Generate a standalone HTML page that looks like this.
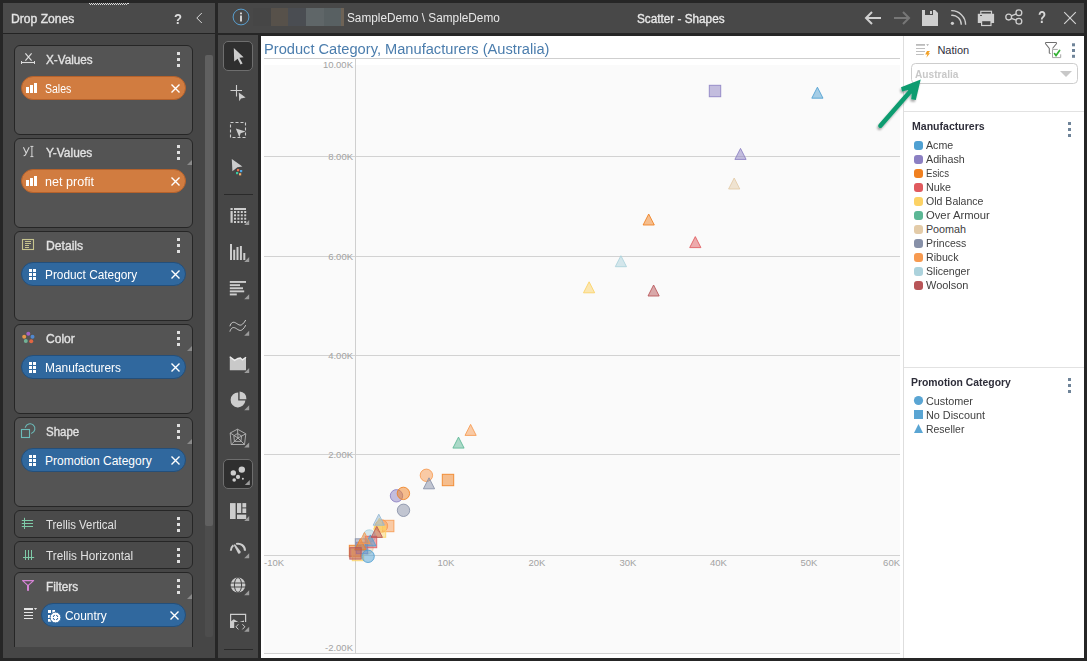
<!DOCTYPE html><html><head><meta charset='utf-8'><style>
*{margin:0;padding:0;box-sizing:border-box}
html,body{width:1087px;height:661px;overflow:hidden;background:#262626;font-family:"Liberation Sans", sans-serif}
.a{position:absolute}
.t{position:absolute;white-space:pre;line-height:1}
.box{position:absolute;left:14px;width:179px;border:1px solid #262626;border-radius:6px;background:#545454;overflow:hidden}
.ttl{position:absolute;left:31px;color:#e2e2e2;font-size:12px;font-weight:700;white-space:pre;line-height:1}
.keb{position:absolute;width:3px;height:3px;background:#e0e0e0;box-shadow:0 6px 0 #e0e0e0,0 12px 0 #e0e0e0}
.rsz{position:absolute;width:0;height:0;border-left:5px solid transparent;border-bottom:5px solid #8a8a8a}
.pill{position:absolute;left:6px;width:165px;height:24px;border-radius:12px}
.po{background:#d17c40;border:1px solid #b5622c}
.pb{background:#30689e;border:1px solid #244f7a}
.ptxt{position:absolute;left:23px;top:6px;color:#fff;font-size:12px;white-space:pre;line-height:1}
.px{position:absolute;left:149px;top:7px;width:9px;height:9px}
.tb{position:absolute;left:0;width:40px;height:30px}
.leg{position:absolute;left:926px;font-size:11px;color:#404040;white-space:pre;line-height:1}
.sw{position:absolute;left:914px;width:9px;height:9px;border-radius:3px}
</style></head><body>
<div class='a' style='left:3px;top:3px;width:212px;height:655px;background:#464646'></div>
<div class='a' style='left:3px;top:3px;width:212px;height:30px;background:#4a4a4a'></div>
<div class='a' style='left:3px;top:33px;width:212px;height:1px;background:#232323'></div>
<svg class='a' style='left:0;top:0' width='140' height='8'><rect x='89' y='3' width='1' height='1' fill='#d8d8d8'/><rect x='90' y='4' width='1' height='1' fill='#d8d8d8'/><rect x='91' y='3' width='1' height='1' fill='#d8d8d8'/><rect x='92' y='4' width='1' height='1' fill='#d8d8d8'/><rect x='93' y='3' width='1' height='1' fill='#d8d8d8'/><rect x='94' y='4' width='1' height='1' fill='#d8d8d8'/><rect x='95' y='3' width='1' height='1' fill='#d8d8d8'/><rect x='96' y='4' width='1' height='1' fill='#d8d8d8'/><rect x='97' y='3' width='1' height='1' fill='#d8d8d8'/><rect x='98' y='4' width='1' height='1' fill='#d8d8d8'/><rect x='99' y='3' width='1' height='1' fill='#d8d8d8'/><rect x='100' y='4' width='1' height='1' fill='#d8d8d8'/><rect x='101' y='3' width='1' height='1' fill='#d8d8d8'/><rect x='102' y='4' width='1' height='1' fill='#d8d8d8'/><rect x='103' y='3' width='1' height='1' fill='#d8d8d8'/><rect x='104' y='4' width='1' height='1' fill='#d8d8d8'/><rect x='105' y='3' width='1' height='1' fill='#d8d8d8'/><rect x='106' y='4' width='1' height='1' fill='#d8d8d8'/><rect x='107' y='3' width='1' height='1' fill='#d8d8d8'/><rect x='108' y='4' width='1' height='1' fill='#d8d8d8'/><rect x='109' y='3' width='1' height='1' fill='#d8d8d8'/><rect x='110' y='4' width='1' height='1' fill='#d8d8d8'/><rect x='111' y='3' width='1' height='1' fill='#d8d8d8'/><rect x='112' y='4' width='1' height='1' fill='#d8d8d8'/><rect x='113' y='3' width='1' height='1' fill='#d8d8d8'/><rect x='114' y='4' width='1' height='1' fill='#d8d8d8'/><rect x='115' y='3' width='1' height='1' fill='#d8d8d8'/><rect x='116' y='4' width='1' height='1' fill='#d8d8d8'/><rect x='117' y='3' width='1' height='1' fill='#d8d8d8'/><rect x='118' y='4' width='1' height='1' fill='#d8d8d8'/><rect x='119' y='3' width='1' height='1' fill='#d8d8d8'/><rect x='120' y='4' width='1' height='1' fill='#d8d8d8'/><rect x='121' y='3' width='1' height='1' fill='#d8d8d8'/><rect x='122' y='4' width='1' height='1' fill='#d8d8d8'/><rect x='123' y='3' width='1' height='1' fill='#d8d8d8'/><rect x='124' y='4' width='1' height='1' fill='#d8d8d8'/><rect x='125' y='3' width='1' height='1' fill='#d8d8d8'/><rect x='126' y='4' width='1' height='1' fill='#d8d8d8'/><rect x='127' y='3' width='2' height='1' fill='#d8d8d8'/></svg>
<div class='t' style='left:10.80px;top:13.00px;font-size:12px;font-weight:400;color:#e4e4e4;transform:scaleX(1.0096);transform-origin:0 0;-webkit-text-stroke:0.35px #e4e4e4;'>Drop Zones</div>
<div class='t' style='left:174.00px;top:10.72px;font-size:15.5px;font-weight:700;color:#dedede;transform:scaleX(0.8461);transform-origin:0 0;'>?</div>
<svg class='a' style='left:194px;top:12px' width='10' height='12'><path d='M7.8 1 L2.8 6 L7.8 11' fill='none' stroke='#dadada' stroke-width='1'/></svg>
<div class='a' style='left:205px;top:55px;width:8px;height:582px;background:#4d4d4d;border-radius:2px'></div>
<div class='a' style='left:205px;top:55px;width:8px;height:471px;background:#606060;border-radius:2px'></div>
<div class='box' style='top:45px;height:90px'></div>
<svg class='a' style='left:20px;top:52px' width='16' height='14'><path d='M5.4 1.3 L11.6 8.6 M11.6 1.3 L5.4 8.6' stroke='#ddd' stroke-width='1.2' fill='none'/><path d='M1.5 10.5 H14.5' stroke='#ddd' stroke-width='1.1'/><path d='M1.5 9 V12 M14.5 9 V12' stroke='#ddd' stroke-width='1' fill='none'/></svg>
<div class='t' style='left:45.90px;top:54.00px;font-size:12px;font-weight:400;color:#e2e2e2;transform:scaleX(0.9745);transform-origin:0 0;-webkit-text-stroke:0.35px #e2e2e2;'>X-Values</div>
<div class='keb' style='left:177px;top:52px'></div>
<div class='pill po' style='left:21px;top:76px'></div>
<svg class='a' style='left:26px;top:83px' width='12' height='11'><rect x='0' y='4' width='3' height='6' fill='#fff'/><rect x='4' y='2' width='3' height='8' fill='#fff'/><rect x='8' y='0' width='3' height='10' fill='#fff'/></svg>
<div class='t' style='left:45.00px;top:82.70px;font-size:12px;font-weight:400;color:#fff;transform:scaleX(0.8767);transform-origin:0 0;'>Sales</div>
<svg class='a' style='left:171px;top:84px' width='9' height='9' viewBox='0 0 9 9'><path d='M0.5 0.5 L8.5 8.5 M8.5 0.5 L0.5 8.5' stroke='#fff' stroke-width='1.4'/></svg>
<div class='box' style='top:138px;height:90px'></div>
<svg class='a' style='left:20px;top:143px' width='16' height='16'><path d='M3.4 4.2 L6.3 10.3 M9.2 4.2 L5.5 11.8 Q5 12.8 3.6 12.8' stroke='#d6d6d6' stroke-width='1.1' fill='none'/><path d='M10.4 3.4 H13.4 M11.9 3.4 V13.6 M10.4 13.6 H13.4' stroke='#d6d6d6' stroke-width='1' fill='none'/></svg>
<div class='t' style='left:45.90px;top:147.00px;font-size:12px;font-weight:400;color:#e2e2e2;transform:scaleX(0.9919);transform-origin:0 0;-webkit-text-stroke:0.35px #e2e2e2;'>Y-Values</div>
<div class='keb' style='left:177px;top:145px'></div>
<div class='rsz' style='left:187px;top:160px'></div>
<div class='pill po' style='left:21px;top:169px'></div>
<svg class='a' style='left:26px;top:176px' width='12' height='11'><rect x='0' y='4' width='3' height='6' fill='#fff'/><rect x='4' y='2' width='3' height='8' fill='#fff'/><rect x='8' y='0' width='3' height='10' fill='#fff'/></svg>
<div class='t' style='left:45.00px;top:175.70px;font-size:12px;font-weight:400;color:#fff;transform:scaleX(1.0476);transform-origin:0 0;'>net profit</div>
<svg class='a' style='left:171px;top:177px' width='9' height='9' viewBox='0 0 9 9'><path d='M0.5 0.5 L8.5 8.5 M8.5 0.5 L0.5 8.5' stroke='#fff' stroke-width='1.4'/></svg>
<div class='box' style='top:231px;height:90px'></div>
<svg class='a' style='left:18px;top:234px' width='20' height='20'><rect x='4.5' y='5.5' width='11' height='10' fill='none' stroke='#c6c48e' stroke-width='1.1'/><rect x='7' y='7' width='6' height='1' fill='#c6c48e'/><rect x='7' y='9' width='6' height='1' fill='#c6c48e'/><rect x='7' y='11' width='4' height='1' fill='#c6c48e'/><rect x='7' y='13' width='4' height='1' fill='#c6c48e'/></svg>
<div class='t' style='left:45.90px;top:240.00px;font-size:12px;font-weight:400;color:#e2e2e2;transform:scaleX(1.0120);transform-origin:0 0;-webkit-text-stroke:0.35px #e2e2e2;'>Details</div>
<div class='keb' style='left:177px;top:238px'></div>
<div class='pill pb' style='left:21px;top:262px'></div>
<svg class='a' style='left:29px;top:269px' width='8' height='12'><rect x='0' y='0' width='3' height='3' fill='#fff'/><rect x='0' y='4' width='3' height='3' fill='#fff'/><rect x='0' y='8' width='3' height='3' fill='#fff'/><rect x='4' y='0' width='3' height='3' fill='#fff'/><rect x='4' y='4' width='3' height='3' fill='#fff'/><rect x='4' y='8' width='3' height='3' fill='#fff'/></svg>
<div class='t' style='left:45.00px;top:268.70px;font-size:12px;font-weight:400;color:#fff;transform:scaleX(0.9876);transform-origin:0 0;'>Product Category</div>
<svg class='a' style='left:171px;top:270px' width='9' height='9' viewBox='0 0 9 9'><path d='M0.5 0.5 L8.5 8.5 M8.5 0.5 L0.5 8.5' stroke='#fff' stroke-width='1.4'/></svg>
<div class='box' style='top:324px;height:90px'></div>
<svg class='a' style='left:18px;top:328px' width='20' height='20'><circle cx='10.3' cy='5.7' r='2' fill='#a262c2'/><circle cx='14.5' cy='8.8' r='2' fill='#5088d0'/><circle cx='6.2' cy='8.8' r='2' fill='#e89848'/><circle cx='7.8' cy='13' r='2' fill='#72b296'/><circle cx='13.2' cy='13.2' r='2' fill='#e26642'/></svg>
<div class='t' style='left:45.90px;top:333.00px;font-size:12px;font-weight:400;color:#e2e2e2;transform:scaleX(1.0042);transform-origin:0 0;-webkit-text-stroke:0.35px #e2e2e2;'>Color</div>
<div class='keb' style='left:177px;top:331px'></div>
<div class='rsz' style='left:187px;top:346px'></div>
<div class='pill pb' style='left:21px;top:355px'></div>
<svg class='a' style='left:29px;top:362px' width='8' height='12'><rect x='0' y='0' width='3' height='3' fill='#fff'/><rect x='0' y='4' width='3' height='3' fill='#fff'/><rect x='0' y='8' width='3' height='3' fill='#fff'/><rect x='4' y='0' width='3' height='3' fill='#fff'/><rect x='4' y='4' width='3' height='3' fill='#fff'/><rect x='4' y='8' width='3' height='3' fill='#fff'/></svg>
<div class='t' style='left:45.00px;top:361.70px;font-size:12px;font-weight:400;color:#fff;transform:scaleX(0.9911);transform-origin:0 0;'>Manufacturers</div>
<svg class='a' style='left:171px;top:363px' width='9' height='9' viewBox='0 0 9 9'><path d='M0.5 0.5 L8.5 8.5 M8.5 0.5 L0.5 8.5' stroke='#fff' stroke-width='1.4'/></svg>
<div class='box' style='top:417px;height:90px'></div>
<svg class='a' style='left:18px;top:420px' width='20' height='20'><rect x='3.5' y='9.5' width='8' height='8' fill='none' stroke='#6cbab8' stroke-width='1.1'/><path d='M7.3 7.3 A4.9 4.9 0 1 1 13.6 13.3' fill='none' stroke='#6cbab8' stroke-width='1.1' stroke-linecap='round'/></svg>
<div class='t' style='left:45.90px;top:426.00px;font-size:12px;font-weight:400;color:#e2e2e2;transform:scaleX(0.9573);transform-origin:0 0;-webkit-text-stroke:0.35px #e2e2e2;'>Shape</div>
<div class='keb' style='left:177px;top:424px'></div>
<div class='rsz' style='left:187px;top:439px'></div>
<div class='pill pb' style='left:21px;top:448px'></div>
<svg class='a' style='left:29px;top:455px' width='8' height='12'><rect x='0' y='0' width='3' height='3' fill='#fff'/><rect x='0' y='4' width='3' height='3' fill='#fff'/><rect x='0' y='8' width='3' height='3' fill='#fff'/><rect x='4' y='0' width='3' height='3' fill='#fff'/><rect x='4' y='4' width='3' height='3' fill='#fff'/><rect x='4' y='8' width='3' height='3' fill='#fff'/></svg>
<div class='t' style='left:45.00px;top:454.70px;font-size:12px;font-weight:400;color:#fff;'>Promotion Category</div>
<svg class='a' style='left:171px;top:456px' width='9' height='9' viewBox='0 0 9 9'><path d='M0.5 0.5 L8.5 8.5 M8.5 0.5 L0.5 8.5' stroke='#fff' stroke-width='1.4'/></svg>
<div class='box' style='top:510px;height:28px;background:#4a4a4a'></div>
<svg class='a' style='left:0;top:500px' width='40' height='70'><path d='M24.5 17.8 V29 M21.8 20.5 H33 M21.8 23.5 H33 M21.8 26.5 H33' stroke='#7fcaa8' stroke-width='1' fill='none'/></svg>
<div class='t' style='left:46.10px;top:518.60px;font-size:12px;font-weight:400;color:#e2e2e2;transform:scaleX(0.9485);transform-origin:0 0;'>Trellis Vertical</div>
<div class='keb' style='left:177px;top:517px'></div>
<div class='box' style='top:541px;height:28px;background:#4a4a4a'></div>
<svg class='a' style='left:0;top:500px' width='40' height='70'><path d='M25.5 50 V60 M28.5 50 V60 M31.5 50 V60 M23 57.5 H34.2' stroke='#7fcaa8' stroke-width='1' fill='none'/></svg>
<div class='t' style='left:46.10px;top:549.60px;font-size:12px;font-weight:400;color:#e2e2e2;transform:scaleX(0.9807);transform-origin:0 0;'>Trellis Horizontal</div>
<div class='keb' style='left:177px;top:548px'></div>
<div class='box' style='top:572px;height:86px'></div>
<svg class='a' style='left:0;top:570px' width='40' height='30'><path d='M22.6 10.6 H33.6 L28 15.6 Z' fill='none' stroke='#d684d6' stroke-width='1.2' stroke-linejoin='round'/><rect x='27' y='15' width='2' height='5.8' fill='#d684d6'/></svg>
<div class='t' style='left:45.90px;top:580.70px;font-size:12px;font-weight:400;color:#e2e2e2;transform:scaleX(0.9835);transform-origin:0 0;-webkit-text-stroke:0.35px #e2e2e2;'>Filters</div>
<div class='keb' style='left:177px;top:579px'></div>
<div class='rsz' style='left:187px;top:594px'></div>
<svg class='a' style='left:18px;top:600px' width='24' height='24'><rect x='6' y='8' width='9' height='2' fill='#e6e6e6'/><path d='M6 12.5 H15 M6 15.5 H15 M6 18.5 H15' stroke='#e6e6e6' stroke-width='1'/><path d='M15.9 8 H19.1 L17.5 10Z' fill='#e0e0e0'/></svg>
<div class='pill pb' style='left:41px;top:603px;width:145px'></div>
<svg class='a' style='left:40px;top:600px' width='24' height='26'><rect x='8' y='10' width='3' height='3' fill='#fff'/><rect x='12.3' y='10' width='2.7' height='3' fill='#fff'/><rect x='8' y='15' width='3' height='3' fill='#fff'/><rect x='8' y='19' width='3' height='2.7' fill='#fff'/><circle cx='15.5' cy='17.5' r='5.4' fill='#fff' stroke='#346a9f' stroke-width='1'/><circle cx='15.5' cy='17.5' r='2.4' fill='none' stroke='#346a9f' stroke-width='1'/><path d='M15.5 13 V22 M11 17.5 H20' stroke='#fff' stroke-width='1.2'/></svg>
<div class='t' style='left:65.30px;top:609.60px;font-size:12px;font-weight:400;color:#fff;transform:scaleX(0.9929);transform-origin:0 0;'>Country</div>
<svg class='a' style='left:170px;top:611px' width='9' height='9' viewBox='0 0 9 9'><path d='M0.5 0.5 L8.5 8.5 M8.5 0.5 L0.5 8.5' stroke='#fff' stroke-width='1.4'/></svg>
<div class='a' style='left:3px;top:647px;width:212px;height:11px;background:#464646'></div>
<div class='a' style='left:218px;top:3px;width:866px;height:30px;background:#484848'></div>
<svg class='a' style='left:232px;top:8px' width='18' height='18'><circle cx='9' cy='9' r='7.9' fill='none' stroke='#5a9fcf' stroke-width='1'/><rect x='8.1' y='4.5' width='1.8' height='1.8' fill='#e0e0e0'/><rect x='8.1' y='7.5' width='1.8' height='6' fill='#e0e0e0'/></svg>
<div class='a' style='left:253px;top:8px;width:18px;height:18px;background:#464646'></div>
<div class='a' style='left:271px;top:8px;width:17px;height:18px;background:#57514a'></div>
<div class='a' style='left:288px;top:8px;width:18px;height:18px;background:#4a4d52'></div>
<div class='a' style='left:306px;top:8px;width:18px;height:18px;background:#5f6668'></div>
<div class='a' style='left:324px;top:8px;width:17px;height:18px;background:#586062'></div>
<div class='a' style='left:341px;top:8px;width:3px;height:18px;background:#6e6356'></div>
<div class='t' style='left:347.00px;top:12.00px;font-size:12px;font-weight:400;color:#e8e8e8;transform:scaleX(0.9833);transform-origin:0 0;'>SampleDemo \ SampleDemo</div>
<div class='t' style='left:636.50px;top:12.50px;font-size:12px;font-weight:400;color:#e8e8e8;transform:scaleX(0.9799);transform-origin:0 0;-webkit-text-stroke:0.35px #e8e8e8;'>Scatter - Shapes</div>
<svg class='a' style='left:864px;top:10px' width='20' height='16'><path d='M2 8 H17 M8 2 L2 8 L8 14' fill='none' stroke='#d0d0d0' stroke-width='2'/></svg>
<svg class='a' style='left:892px;top:10px' width='20' height='16'><path d='M2 8 H17 M11 2 L17 8 L11 14' fill='none' stroke='#777' stroke-width='2'/></svg>
<svg class='a' style='left:921px;top:9px' width='18' height='18'><path d='M1 1 H14 L17 4 V17 H1 Z' fill='#cfcfcf'/><rect x='4' y='1' width='8' height='5' fill='#484848'/><rect x='9' y='2' width='2' height='3' fill='#cfcfcf'/></svg>
<svg class='a' style='left:0;top:0' width='1087' height='40'><circle cx='952.4' cy='23.3' r='1.6' fill='#cfcfcf'/><path d='M951.2 15.3 A9.3 9.3 0 0 1 961.3 24.8 M951.2 10.7 A14 14 0 0 1 965.6 24.8' fill='none' stroke='#cfcfcf' stroke-width='1.35'/><rect x='980.8' y='11.3' width='10.7' height='3' fill='none' stroke='#cfcfcf' stroke-width='1.2'/><rect x='977.8' y='13.8' width='16.3' height='9.2' fill='#cfcfcf'/><rect x='980' y='15' width='2' height='1' fill='#555'/><rect x='981.6' y='20.6' width='9.4' height='4.9' fill='#484848' stroke='#cfcfcf' stroke-width='1.2'/><circle cx='1008.7' cy='17.1' r='2.9' fill='none' stroke='#cfcfcf' stroke-width='1.3'/><circle cx='1018.9' cy='12.8' r='2.9' fill='none' stroke='#cfcfcf' stroke-width='1.3'/><circle cx='1018.9' cy='21.2' r='2.9' fill='none' stroke='#cfcfcf' stroke-width='1.3'/><path d='M1011.4 15.9 L1016.2 13.9 M1011.4 18.3 L1016.2 20.1' stroke='#cfcfcf' stroke-width='1.3'/></svg>
<div class='t' style='left:1038.00px;top:9.50px;font-size:16px;font-weight:700;color:#d8d8d8;transform:scaleX(0.8299);transform-origin:0 0;'>?</div>
<svg class='a' style='left:1063px;top:11px' width='14' height='14'><path d='M1.2 1.2 L12.8 12.8 M12.8 1.2 L1.2 12.8' stroke='#d4d4d4' stroke-width='1.15'/></svg>
<div class='a' style='left:218px;top:35px;width:40px;height:623px;background:#464646'></div>
<div class='a' style='left:223px;top:41px;width:30px;height:30px;border:1px solid #6e6e6e;border-radius:5px;background:#2f2f2f'></div>
<div class='a' style='left:223px;top:459px;width:30px;height:30px;border:1px solid #6e6e6e;border-radius:5px;background:#2f2f2f'></div>
<svg class='a' style='left:0;top:0' width='1087' height='661'><path d='M233.8 48 L243.6 57.3 L239.4 57.8 L242.6 63.4 L240.6 64.4 L237.6 58.7 L234.2 61.6Z' fill='#cdcdcd'/><path d='M230.5 90.5 H242 M236.5 85 V96.5' stroke='#cdcdcd' stroke-width='1.1'/><path d='M238.8 92.6 L245.6 97.6 L241 98.4 L239.2 101.2Z' fill='#cdcdcd'/><path d='M230.5 122.5 H245.5 V137.5 H230.5Z' fill='none' stroke='#cdcdcd' stroke-width='1.1' stroke-dasharray='3 2'/><rect x='234' y='124' width='12' height='12' fill='#464646' opacity='0'/><path d='M235.8 128.4 L245.6 131.6 L240.6 133.2 L239.4 137.2Z' fill='#cdcdcd'/><path d='M231.8 159 L242.4 166.6 L237.4 167.2 L232.4 171.2Z' fill='#cdcdcd'/><rect x='237' y='169' width='2.2' height='2.2' fill='#e8704a'/><rect x='240' y='170' width='2.2' height='2.2' fill='#52a8e6'/><rect x='236' y='172' width='2.2' height='2.2' fill='#3cc8a0'/><rect x='239' y='173.2' width='2.2' height='2.2' fill='#f0b070'/><rect x='224' y='194' width='29' height='1' fill='#2a2a2a'/><rect x='224' y='649' width='29' height='1' fill='#2a2a2a'/><rect x='230.5' y='208' width='2.2' height='2' fill='#cdcdcd'/><rect x='234' y='208' width='12' height='2' fill='#cdcdcd'/><rect x='230.5' y='211' width='2.2' height='11.8' fill='#cdcdcd'/><rect x='234' y='211' width='2' height='2' fill='#cdcdcd'/><rect x='234' y='214.3' width='2' height='2' fill='#cdcdcd'/><rect x='234' y='217.7' width='2' height='2' fill='#cdcdcd'/><rect x='234' y='221' width='2' height='2' fill='#cdcdcd'/><rect x='237.4' y='211' width='2' height='2' fill='#cdcdcd'/><rect x='237.4' y='214.3' width='2' height='2' fill='#cdcdcd'/><rect x='237.4' y='217.7' width='2' height='2' fill='#cdcdcd'/><rect x='237.4' y='221' width='2' height='2' fill='#cdcdcd'/><rect x='240.8' y='211' width='2' height='2' fill='#cdcdcd'/><rect x='240.8' y='214.3' width='2' height='2' fill='#cdcdcd'/><rect x='240.8' y='217.7' width='2' height='2' fill='#cdcdcd'/><rect x='240.8' y='221' width='2' height='2' fill='#cdcdcd'/><rect x='244.2' y='211' width='2' height='2' fill='#cdcdcd'/><rect x='244.2' y='214.3' width='2' height='2' fill='#cdcdcd'/><rect x='244.2' y='217.7' width='2' height='2' fill='#cdcdcd'/><rect x='244.2' y='221' width='2' height='2' fill='#cdcdcd'/><path d='M244.2 225 H249.2 V220Z' fill='#9c9c9c'/><rect x='230' y='244' width='2' height='16' fill='#cdcdcd'/><rect x='233.2' y='249.8' width='2' height='10.199999999999989' fill='#cdcdcd'/><rect x='236.5' y='247' width='2' height='13' fill='#cdcdcd'/><rect x='239.9' y='246' width='2' height='14' fill='#cdcdcd'/><rect x='243.3' y='253' width='2' height='7' fill='#cdcdcd'/><path d='M244.2 262 H249.2 V257Z' fill='#9c9c9c'/><rect x='229.8' y='281' width='16.19999999999999' height='1.9' fill='#cdcdcd'/><rect x='229.8' y='284.2' width='10.199999999999989' height='1.9' fill='#cdcdcd'/><rect x='229.8' y='287.3' width='13.199999999999989' height='1.9' fill='#cdcdcd'/><rect x='229.8' y='290.4' width='14.399999999999977' height='1.9' fill='#cdcdcd'/><rect x='229.8' y='293.5' width='7.0' height='1.9' fill='#cdcdcd'/><path d='M244.2 299.2 H249.2 V294.2Z' fill='#9c9c9c'/><path d='M229.9 326.3 C231 322.5 233 321.5 235.5 322.8 C238 324.2 240 326.4 242.5 324.2 C244 322.8 245 321.5 245.7 320 M229.9 331.6 C231 327.8 233 326.8 235.5 328.1 C238 329.5 240 331.7 242.5 329.5 C244 328.1 245 326.8 245.7 325.2' fill='none' stroke='#cdcdcd' stroke-width='1'/><path d='M244.2 335.8 H249.2 V330.8Z' fill='#9c9c9c'/><path d='M229.8 356.5 L234.6 360.2 L238 358.3 L240.4 357.8 L242.5 359.7 L246 357 V370.3 H229.8Z' fill='#c9c9c9'/><path d='M229.8 356.8 L234.6 360.4 L238 358.5 L240.4 358 L242.5 359.9 L246 357.2' fill='none' stroke='#ececec' stroke-width='1.4'/><path d='M244.2 373 H249.2 V368Z' fill='#9c9c9c'/><path d='M238.2 392.6 V400.6 H245.4 A7.4 7.4 0 1 1 238.2 392.6Z' fill='#cdcdcd'/><path d='M239.6 391.4 A7 7 0 0 1 246.4 399.2 H239.6Z' fill='#cdcdcd'/><path d='M244.2 410.3 H249.2 V405.3Z' fill='#9c9c9c'/><path d='M237.5 429.2 L245.8 433.8 L244.5 444.5 L231.2 444.5 L230.2 433 Z M237.5 433.5 L241.6 436 L240.9 441.4 L234.4 441.4 L233.9 435.8Z M237.5 429.2 L238 438 M245.8 433.8 L238 438 M244.5 444.5 L238 438 M231.2 444.5 L238 438 M230.2 433 L238 438' fill='none' stroke='#b4b4b4' stroke-width='0.9'/><path d='M244.2 447.6 H249.2 V442.6Z' fill='#9c9c9c'/><circle cx='241.8' cy='469.6' r='3.2' fill='#cdcdcd'/><circle cx='233.3' cy='472.9' r='2.7' fill='#cdcdcd'/><circle cx='238' cy='476.9' r='2.1' fill='#cdcdcd'/><circle cx='234.2' cy='480' r='1.8' fill='#cdcdcd'/><circle cx='242.9' cy='478.7' r='1' fill='#cdcdcd'/><path d='M244.8 485 H249.8 V480Z' fill='#9c9c9c'/><rect x='230' y='503.1' width='5.6' height='15.9' fill='#cdcdcd'/><rect x='237' y='503.1' width='4.2' height='9.9' fill='#cdcdcd'/><rect x='242.4' y='503.1' width='3.8' height='4.3' fill='#cdcdcd'/><rect x='242.4' y='508.4' width='3.8' height='4.6' fill='#cdcdcd'/><rect x='237' y='514.6' width='9.2' height='4.4' fill='#cdcdcd'/><path d='M244.2 521 H249.2 V516Z' fill='#9c9c9c'/><path d='M230.8 550.8 A7.1 7.1 0 0 1 233.4 545.3 M236.1 543.9 A7.1 7.1 0 0 1 245 550.8' fill='none' stroke='#cdcdcd' stroke-width='2'/><path d='M233.6 544.8 L235 544.2 L240.8 551.8 Q240.6 554 238.2 553.6 Z' fill='#cdcdcd'/><path d='M244.2 558.2 H249.2 V553.2Z' fill='#9c9c9c'/><circle cx='238' cy='585' r='7.4' fill='#cdcdcd'/><path d='M230.6 583 H245.4 M230.6 587 H245.4' stroke='#464646' stroke-width='1'/><ellipse cx='238' cy='585' rx='3.6' ry='7.4' fill='none' stroke='#464646' stroke-width='1'/><path d='M244.2 595.2 H249.2 V590.2Z' fill='#9c9c9c'/><path d='M230.6 627.4 V614.4 H245.6 V622' fill='none' stroke='#cdcdcd' stroke-width='1.2'/><path d='M230 627.9 V622 L233.8 619.2 L238.7 622.2 L244 620.4 V622 H234.2 V627.9Z' fill='#cdcdcd'/><path d='M238.4 624.2 L236 626.8 L238.4 629.4 M242.4 624.2 L244.8 626.8 L242.4 629.4' fill='none' stroke='#cdcdcd' stroke-width='1'/><path d='M244.2 631.8 H249.2 V626.8Z' fill='#9c9c9c'/></svg>
<div class='a' style='left:261px;top:36px;width:823px;height:622px;background:#fff'></div>
<div class='t' style='left:263.90px;top:42.77px;font-size:13.8px;font-weight:400;color:#4b7dad;transform:scaleX(1.0615);transform-origin:0 0;'>Product Category, Manufacturers (Australia)</div>
<svg class='a' style='left:0;top:0' width='1087' height='661'><rect x='264' y='58' width='636' height='1' fill='#cfcfcf'/><rect x='264' y='65' width='636' height='589' fill='#fafafa'/><rect x='264' y='156' width='636' height='1' fill='#d2d2d2'/><rect x='264' y='256' width='636' height='1' fill='#d2d2d2'/><rect x='264' y='355' width='636' height='1' fill='#d2d2d2'/><rect x='264' y='454' width='636' height='1' fill='#d2d2d2'/><rect x='264' y='555' width='636' height='1' fill='#d2d2d2'/><rect x='264' y='653' width='636' height='1' fill='#d2d2d2'/><rect x='355' y='59' width='1' height='595' fill='#cfcfcf'/><text x='353' y='67.5' text-anchor='end' font-family='Liberation Sans' font-size='9.5' fill='#a2a2a2'>10.00K</text><text x='353' y='160' text-anchor='end' font-family='Liberation Sans' font-size='9.5' fill='#a2a2a2'>8.00K</text><text x='353' y='260' text-anchor='end' font-family='Liberation Sans' font-size='9.5' fill='#a2a2a2'>6.00K</text><text x='353' y='359' text-anchor='end' font-family='Liberation Sans' font-size='9.5' fill='#a2a2a2'>4.00K</text><text x='353' y='458' text-anchor='end' font-family='Liberation Sans' font-size='9.5' fill='#a2a2a2'>2.00K</text><text x='353' y='651' text-anchor='end' font-family='Liberation Sans' font-size='9.5' fill='#a2a2a2'>-2.00K</text><text x='264' y='566' text-anchor='start' font-family='Liberation Sans' font-size='9.5' fill='#a2a2a2'>-10K</text><text x='446' y='566' text-anchor='middle' font-family='Liberation Sans' font-size='9.5' fill='#a2a2a2'>10K</text><text x='537' y='566' text-anchor='middle' font-family='Liberation Sans' font-size='9.5' fill='#a2a2a2'>20K</text><text x='628' y='566' text-anchor='middle' font-family='Liberation Sans' font-size='9.5' fill='#a2a2a2'>30K</text><text x='718.5' y='566' text-anchor='middle' font-family='Liberation Sans' font-size='9.5' fill='#a2a2a2'>40K</text><text x='809' y='566' text-anchor='middle' font-family='Liberation Sans' font-size='9.5' fill='#a2a2a2'>50K</text><text x='900' y='566' text-anchor='end' font-family='Liberation Sans' font-size='9.5' fill='#a2a2a2'>60K</text><path d='M817.4 87.2 L823.0 98.2 L811.8 98.2Z' fill='#4fa0d2' fill-opacity='0.5' stroke='#4fa0d2' stroke-opacity='0.85' stroke-width='1'/><rect x='709.3' y='85.3' width='11.4' height='11.4' fill='#8b7fc2' fill-opacity='0.5' stroke='#8b7fc2' stroke-opacity='0.85' stroke-width='1'/><path d='M740.5 148.4 L746.1 159.4 L734.9 159.4Z' fill='#8b7fc2' fill-opacity='0.5' stroke='#8b7fc2' stroke-opacity='0.85' stroke-width='1'/><path d='M734.2 178.0 L739.8000000000001 189.0 L728.6 189.0Z' fill='#e3cba8' fill-opacity='0.5' stroke='#e3cba8' stroke-opacity='0.85' stroke-width='1'/><path d='M648.7 214.0 L654.3000000000001 225.0 L643.1 225.0Z' fill='#f08020' fill-opacity='0.5' stroke='#f08020' stroke-opacity='0.85' stroke-width='1'/><path d='M695.3 236.6 L700.9 247.6 L689.6999999999999 247.6Z' fill='#e05a5e' fill-opacity='0.5' stroke='#e05a5e' stroke-opacity='0.85' stroke-width='1'/><path d='M620.9 255.70000000000002 L626.5 266.7 L615.3 266.7Z' fill='#acd2dc' fill-opacity='0.5' stroke='#acd2dc' stroke-opacity='0.85' stroke-width='1'/><path d='M589.1 281.79999999999995 L594.7 292.79999999999995 L583.5 292.79999999999995Z' fill='#fcd265' fill-opacity='0.5' stroke='#fcd265' stroke-opacity='0.85' stroke-width='1'/><path d='M653.6 285.0 L659.2 296.0 L648.0 296.0Z' fill='#b85558' fill-opacity='0.5' stroke='#b85558' stroke-opacity='0.85' stroke-width='1'/><path d='M470.6 424.4 L476.20000000000005 435.4 L465.0 435.4Z' fill='#f79a50' fill-opacity='0.5' stroke='#f79a50' stroke-opacity='0.85' stroke-width='1'/><path d='M458.5 437.09999999999997 L464.1 448.09999999999997 L452.9 448.09999999999997Z' fill='#5cb795' fill-opacity='0.5' stroke='#5cb795' stroke-opacity='0.85' stroke-width='1'/><circle cx='426.4' cy='475.3' r='6.2' fill='#f79a50' fill-opacity='0.5' stroke='#f79a50' stroke-opacity='0.85' stroke-width='1'/><path d='M429 477.79999999999995 L434.6 488.79999999999995 L423.4 488.79999999999995Z' fill='#8790a8' fill-opacity='0.5' stroke='#8790a8' stroke-opacity='0.85' stroke-width='1'/><rect x='442.3' y='474.3' width='11.4' height='11.4' fill='#f08020' fill-opacity='0.5' stroke='#f08020' stroke-opacity='0.85' stroke-width='1'/><circle cx='396.5' cy='495.8' r='6.2' fill='#8b7fc2' fill-opacity='0.5' stroke='#8b7fc2' stroke-opacity='0.85' stroke-width='1'/><circle cx='403.4' cy='493.4' r='6.2' fill='#f08020' fill-opacity='0.5' stroke='#f08020' stroke-opacity='0.85' stroke-width='1'/><circle cx='403.5' cy='510.3' r='6.2' fill='#8790a8' fill-opacity='0.5' stroke='#8790a8' stroke-opacity='0.85' stroke-width='1'/><rect x='349.3' y='545.3' width='11.4' height='11.4' fill='#f08020' fill-opacity='0.5' stroke='#f08020' stroke-opacity='0.85' stroke-width='1'/><rect x='352.3' y='549.3' width='11.4' height='11.4' fill='#fcd265' fill-opacity='0.5' stroke='#fcd265' stroke-opacity='0.85' stroke-width='1'/><circle cx='367' cy='548' r='6.2' fill='#e3cba8' fill-opacity='0.5' stroke='#e3cba8' stroke-opacity='0.85' stroke-width='1'/><rect x='356.3' y='542.3' width='11.4' height='11.4' fill='#8b7fc2' fill-opacity='0.5' stroke='#8b7fc2' stroke-opacity='0.85' stroke-width='1'/><circle cx='381.5' cy='526' r='6.2' fill='#f79a50' fill-opacity='0.5' stroke='#f79a50' stroke-opacity='0.85' stroke-width='1'/><rect x='382.5' y='520.3' width='11.4' height='11.4' fill='#f79a50' fill-opacity='0.5' stroke='#f79a50' stroke-opacity='0.85' stroke-width='1'/><rect x='374.3' y='525.9' width='11.4' height='11.4' fill='#fcd265' fill-opacity='0.5' stroke='#fcd265' stroke-opacity='0.85' stroke-width='1'/><path d='M379.3 518.1999999999999 L384.90000000000003 529.1999999999999 L373.7 529.1999999999999Z' fill='#fcd265' fill-opacity='0.5' stroke='#fcd265' stroke-opacity='0.85' stroke-width='1'/><path d='M378.8 514.1999999999999 L384.40000000000003 525.1999999999999 L373.2 525.1999999999999Z' fill='#94b8d4' fill-opacity='0.5' stroke='#94b8d4' stroke-opacity='0.85' stroke-width='1'/><circle cx='369.3' cy='536' r='6.2' fill='#acd2dc' fill-opacity='0.5' stroke='#acd2dc' stroke-opacity='0.85' stroke-width='1'/><rect x='365.3' y='536.3' width='11.4' height='11.4' fill='#e05a5e' fill-opacity='0.5' stroke='#e05a5e' stroke-opacity='0.85' stroke-width='1'/><path d='M370.4 534.9 L376.0 545.9 L364.79999999999995 545.9Z' fill='#4fa0d2' fill-opacity='0.5' stroke='#4fa0d2' stroke-opacity='0.85' stroke-width='1'/><rect x='355.3' y='538.8' width='11.4' height='11.4' fill='#8790a8' fill-opacity='0.5' stroke='#8790a8' stroke-opacity='0.85' stroke-width='1'/><path d='M360.4 538.8 L366.0 549.8 L354.79999999999995 549.8Z' fill='#f08020' fill-opacity='0.5' stroke='#f08020' stroke-opacity='0.85' stroke-width='1'/><path d='M364.5 532.4 L370.1 543.4 L358.9 543.4Z' fill='#f79a50' fill-opacity='0.5' stroke='#f79a50' stroke-opacity='0.85' stroke-width='1'/><path d='M376.8 526.4 L382.40000000000003 537.4 L371.2 537.4Z' fill='#b85558' fill-opacity='0.5' stroke='#b85558' stroke-opacity='0.85' stroke-width='1'/><rect x='349.8' y='547.6999999999999' width='11.4' height='11.4' fill='#b85558' fill-opacity='0.5' stroke='#b85558' stroke-opacity='0.85' stroke-width='1'/><circle cx='368.1' cy='556.3' r='6.2' fill='#4fa0d2' fill-opacity='0.5' stroke='#4fa0d2' stroke-opacity='0.85' stroke-width='1'/><rect x='903' y='36' width='1' height='622' fill='#dedede'/><rect x='904' y='111' width='180' height='1' fill='#e2e2e2'/><rect x='904' y='367' width='180' height='1' fill='#e2e2e2'/><rect x='911.5' y='63.5' width='166' height='20' rx='4' fill='#fff' stroke='#cdcdcd' stroke-width='1'/><path d='M1060 71 H1072 L1066 77Z' fill='#c8c8c8'/><path d='M916 44.9 H925' stroke='#b4b4b4' stroke-width='1.6'/><path d='M916 48.5 H925 M916 51.5 H925 M916 54.5 H923.8' stroke='#b8b8b8' stroke-width='0.9'/><path d='M926.2 44.2 H929 L927.6 45.9Z' fill='#aaa'/><path d='M927 51 H930 L928.3 53.2 H930 L926.3 57.8 L927.4 54.6 H925.2Z' fill='#f2a024'/><path d='M1049.3 53.2 V48.5 L1045.6 43.8 Q1045 42.5 1046.3 42.5 H1055.7 Q1057 42.5 1056.4 43.8 L1052.5 48.5' fill='none' stroke='#6e6e6e' stroke-width='1.05'/><path d='M1049.3 53 Q1049.4 53.6 1050.5 53.6' fill='none' stroke='#6e6e6e' stroke-width='1'/><path d='M1057.8 49.4 H1052.5 V57.6 H1060.7 V54.3' fill='none' stroke='#a6a6a6' stroke-width='1'/><path d='M1054.5 53.6 L1056 55.6 L1059.6 50.5' fill='none' stroke='#33b033' stroke-width='1.7' stroke-linecap='round'/><rect x='1072' y='43.3' width='3' height='3' fill='#6f8499'/><rect x='1072' y='49' width='3' height='3' fill='#6f8499'/><rect x='1072' y='54.8' width='3' height='3' fill='#6f8499'/><rect x='1068' y='122' width='3' height='3' fill='#6f8499'/><rect x='1068' y='128' width='3' height='3' fill='#6f8499'/><rect x='1068' y='134' width='3' height='3' fill='#6f8499'/><rect x='1068' y='378' width='3' height='3' fill='#6f8499'/><rect x='1068' y='384' width='3' height='3' fill='#6f8499'/><rect x='1068' y='390' width='3' height='3' fill='#6f8499'/><circle cx='918.5' cy='400.5' r='4.6' fill='#5aa5d3'/><rect x='914' y='410' width='9' height='9' fill='#5aa5d3'/><path d='M918.5 424 L923 433 L914 433Z' fill='#5aa5d3'/><g filter='url(#sh)'><path d='M880.4 125.7 L909.8 92' stroke='#0f9c70' stroke-width='4.5' stroke-linecap='round'/><path d='M920.7 79.5 L901 87.2 L902.1 91.5 L908 89.9 L911.7 94 L911.2 99.2 L915.8 100.1Z' fill='#0f9c70'/></g><defs><filter id='sh' x='-20%' y='-20%' width='140%' height='140%'><feGaussianBlur in='SourceAlpha' stdDeviation='1.2'/><feOffset dx='-1' dy='1.5'/><feComponentTransfer><feFuncA type='linear' slope='0.35'/></feComponentTransfer><feMerge><feMergeNode/><feMergeNode in='SourceGraphic'/></feMerge></filter></defs></svg>
<div class='t' style='left:937.40px;top:44.65px;font-size:11px;font-weight:400;color:#303040;'>Nation</div>
<div class='t' style='left:915.40px;top:68.52px;font-size:10.8px;font-weight:700;color:#c8c8c8;transform:scaleX(0.9410);transform-origin:0 0;'>Australia</div>
<div class='t' style='left:911.50px;top:120.65px;font-size:11px;font-weight:700;color:#2e2e3a;transform:scaleX(0.9592);transform-origin:0 0;'>Manufacturers</div>
<div class='sw' style='top:141px;background:#4fa0d2'></div>
<div class='t' style='left:925.90px;top:139.62px;font-size:10.8px;font-weight:400;color:#404040;transform:scaleX(0.9857);transform-origin:0 0;'>Acme</div>
<div class='sw' style='top:155px;background:#8b7fc2'></div>
<div class='t' style='left:925.90px;top:153.62px;font-size:10.8px;font-weight:400;color:#404040;transform:scaleX(0.9938);transform-origin:0 0;'>Adihash</div>
<div class='sw' style='top:169px;background:#f08020'></div>
<div class='t' style='left:925.90px;top:167.62px;font-size:10.8px;font-weight:400;color:#404040;transform:scaleX(0.8911);transform-origin:0 0;'>Esics</div>
<div class='sw' style='top:183px;background:#e05a5e'></div>
<div class='t' style='left:925.90px;top:181.62px;font-size:10.8px;font-weight:400;color:#404040;transform:scaleX(0.9914);transform-origin:0 0;'>Nuke</div>
<div class='sw' style='top:197px;background:#fcd265'></div>
<div class='t' style='left:925.90px;top:195.62px;font-size:10.8px;font-weight:400;color:#404040;transform:scaleX(0.9769);transform-origin:0 0;'>Old Balance</div>
<div class='sw' style='top:211px;background:#5cb795'></div>
<div class='t' style='left:925.90px;top:209.62px;font-size:10.8px;font-weight:400;color:#404040;transform:scaleX(1.0419);transform-origin:0 0;'>Over Armour</div>
<div class='sw' style='top:225px;background:#e3cba8'></div>
<div class='t' style='left:925.90px;top:223.62px;font-size:10.8px;font-weight:400;color:#404040;'>Poomah</div>
<div class='sw' style='top:239px;background:#8790a8'></div>
<div class='t' style='left:925.90px;top:237.62px;font-size:10.8px;font-weight:400;color:#404040;transform:scaleX(0.9706);transform-origin:0 0;'>Princess</div>
<div class='sw' style='top:253px;background:#f79a50'></div>
<div class='t' style='left:925.90px;top:251.62px;font-size:10.8px;font-weight:400;color:#404040;transform:scaleX(0.9834);transform-origin:0 0;'>Ribuck</div>
<div class='sw' style='top:267px;background:#acd2dc'></div>
<div class='t' style='left:925.90px;top:265.62px;font-size:10.8px;font-weight:400;color:#404040;transform:scaleX(0.9770);transform-origin:0 0;'>Slicenger</div>
<div class='sw' style='top:281px;background:#b85558'></div>
<div class='t' style='left:925.90px;top:279.62px;font-size:10.8px;font-weight:400;color:#404040;transform:scaleX(1.0155);transform-origin:0 0;'>Woolson</div>
<div class='t' style='left:911.20px;top:377.45px;font-size:11px;font-weight:700;color:#2e2e3a;transform:scaleX(0.9441);transform-origin:0 0;'>Promotion Category</div>
<div class='t' style='left:926.10px;top:396.02px;font-size:10.8px;font-weight:400;color:#404040;transform:scaleX(1.0039);transform-origin:0 0;'>Customer</div>
<div class='t' style='left:926.10px;top:410.02px;font-size:10.8px;font-weight:400;color:#404040;transform:scaleX(1.0033);transform-origin:0 0;'>No Discount</div>
<div class='t' style='left:926.10px;top:424.02px;font-size:10.8px;font-weight:400;color:#404040;transform:scaleX(0.9688);transform-origin:0 0;'>Reseller</div>
</body></html>
